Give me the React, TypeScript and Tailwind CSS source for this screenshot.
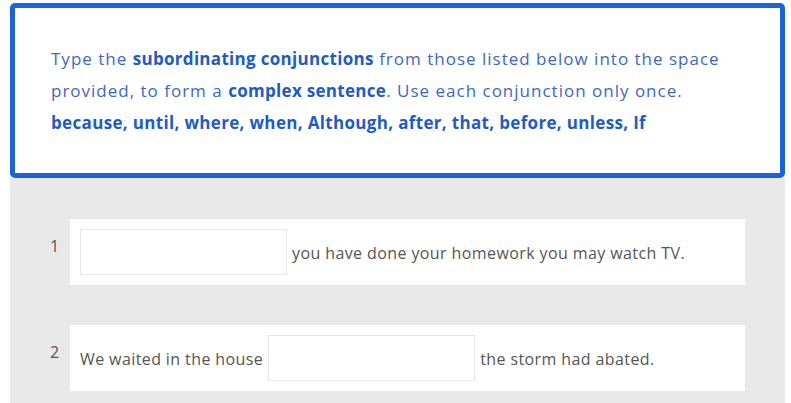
import React from 'react';

type Part = { text?: string; blank?: boolean };

const questions: { id: number; parts: Part[] }[] = [
    { id: 1, parts: [{ blank: true }, { text: 'you have done your homework you may watch TV.' }] },
    { id: 2, parts: [{ text: 'We waited in the house' }, { blank: true }, { text: 'the storm had abated.' }] },
];

const QuestionRow: React.FC<{ id: number; parts: Part[] }> = ({ id, parts }) => (
    <div className="flex">
        <div className="w-[20px] shrink-0 pt-[17px] text-[16px] leading-[20px] text-[#555]">{id}</div>
        <div className="flex-1 bg-white p-[10px] flex items-center gap-[5px] text-[16px] text-[#555] tracking-[0.4px]">
            {parts.map((p, i) =>
                p.blank ? (
                    <input key={i} type="text" className="w-[207px] h-[46px] border border-[#e6e6e6] bg-white outline-none" />
                ) : (
                    <span key={i} className="pt-[1px]">{p.text}</span>
                )
            )}
        </div>
    </div>
);

export default function App() {
    return (
        <div className="w-[791px] h-[403px] bg-white overflow-hidden font-['Open_Sans',sans-serif]">
            <div className="ml-[10px] w-[775px]">
                <div className="mt-[3px] border-[5px] border-[#1c63d7] rounded-[5px] bg-white px-[36px] pt-[35px] pb-[34px]">
                    <p className="text-[17px] leading-[32px] text-[#3d68c0] tracking-[1px]">
                        Type the <b className="font-bold text-[#1e5bc6] tracking-[0.3px]">subordinating conjunctions</b> from those listed below into the space provided, to form a{' '}
                        <b className="font-bold text-[#1e5bc6] tracking-[0.3px]">complex sentence</b>. Use each conjunction only once.
                        <br />
                        <b className="font-bold text-[#1e5bc6] tracking-[0.33px]">because, until, where, when, Although, after, that, before, unless, If</b>
                    </p>
                </div>
                <div className="bg-[#e9e9e9] pl-[40px] pr-[40px] pt-[41px] pb-[20px] flex flex-col gap-[40px]">
                    {questions.map(q => (
                        <QuestionRow key={q.id} id={q.id} parts={q.parts} />
                    ))}
                </div>
            </div>
        </div>
    );
}
